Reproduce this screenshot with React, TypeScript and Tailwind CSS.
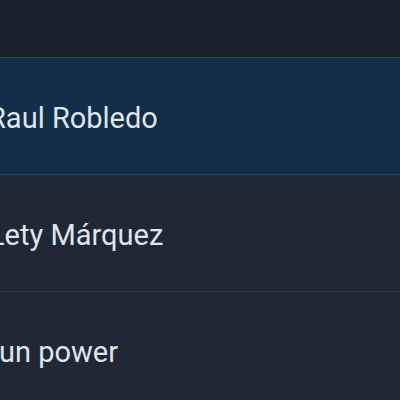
const contacts = [
  { name: "Raul Robledo", selected: true, shift: "ml-[-12px]" },
  { name: "Lety Márquez", selected: false, shift: "ml-[-11px]" },
  { name: "un power", selected: false, shift: "ml-[-1px]" },
];

export default function App() {
  return (
    <div className="w-[400px] h-[400px] overflow-hidden bg-[#1f2834] font-['Roboto',sans-serif]">
      <div className="h-[57px] bg-[#17202b]" />
      <ul className="flex flex-col">
        {contacts.map((c) => (
          <li
            key={c.name}
            className={
              c.selected
                ? "h-[118px] flex items-center pt-[5px] border-t border-b border-[#2a4556] bg-[#122e48]"
                : "h-[117px] flex items-center pt-[5px] border-b border-[#2c3643] bg-[#1f2834]"
            }
          >
            <span className={`${c.shift} text-[29px] text-[#dfe5eb] whitespace-nowrap`}>
              {c.name}
            </span>
          </li>
        ))}
      </ul>
    </div>
  );
}
